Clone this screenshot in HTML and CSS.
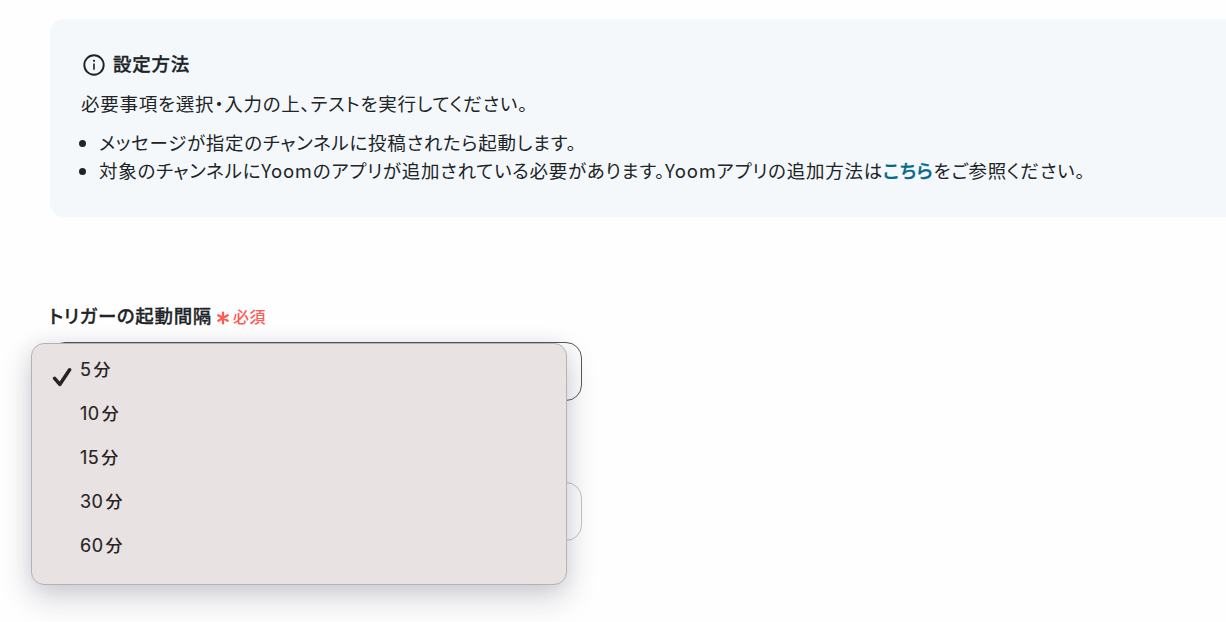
FILE: index.html
```html
<!DOCTYPE html>
<html lang="ja">
<head>
  <meta charset="UTF-8">
  <title>トリガー設定</title>
  <link rel="stylesheet" href="styles.css">
</head>
<body>
  <section class="guide">
    <h2 class="guide-title">
      <svg class="info-icon" viewBox="0 0 22 22" width="22" height="22" fill="none" stroke="#1c2226">
        <circle cx="11" cy="11" r="9.7" stroke-width="1.9"/>
        <path d="M11 9.6v6.2" stroke-width="1.6"/>
        <circle cx="11" cy="6.8" r="1.1" fill="#1c2226" stroke="none"/>
      </svg>
      <span>設定方法</span>
    </h2>
    <p class="guide-text">必要事項を選択・入力の上、テストを実行してください。</p>
    <ul class="guide-list">
      <li>メッセージが指定のチャンネルに投稿されたら起動します。</li>
      <li>対象のチャンネルにYoomのアプリが追加されている必要があります。Yoomアプリの追加方法は<a class="guide-link">こちら</a>をご参照ください。</li>
    </ul>
  </section>

  <main class="form">
    <div class="label">
      <span class="label-text">トリガーの起動間隔</span>
      <svg class="asterisk" viewBox="0 0 12 14" width="12" height="14" stroke="#ff5a55" stroke-width="2.3" stroke-linecap="round">
        <path d="M6 1.6v10.8M1.3 4.3l9.4 5.4M10.7 4.3L1.3 9.7"/>
      </svg>
      <span class="required">必須</span>
    </div>
    <div class="select">
      <ul class="menu">
        <li>
          <svg class="check" viewBox="0 0 20 20" width="20" height="20" fill="none" stroke="#272223" stroke-width="3.5" stroke-linecap="round" stroke-linejoin="round">
            <path d="M2.6 11.4l5.2 6L17.6 2.8"/>
          </svg>
          <span>5</span>分
        </li>
        <li><span>10</span>分</li>
        <li><span>15</span>分</li>
        <li><span>30</span>分</li>
        <li><span>60</span>分</li>
      </ul>
    </div>
    <div class="select next"></div>
  </main>
</body>
</html>
```
FILE: styles.css
```css
* {
  box-sizing: border-box;
}
body {
  margin: 0; height: 622px; overflow: hidden;
  background: #fefefe; color: #202427;
  font-family: "Noto Sans CJK JP", sans-serif;
  font-size: 18.5px;
  font-feature-settings: "palt";
  letter-spacing: 0.74px;
}
.guide {
  margin: 19px 0 0 50px; height: 198px;
  padding: 30px 0 0 31px;
  background: #f4f8fb;
  border-radius: 14px 0 0 14px;
  white-space: nowrap;
}
.guide-title {
  display: flex; align-items: center; gap: 8px;
  margin: 0; padding-left: 2px;
  font-size: 18.5px; font-weight: 500; line-height: 28px;
  -webkit-text-stroke: 0.3px;
}
.info-icon {
  position: relative; top: 2px;
}
.guide-text {
  margin: 12px 0 11px; line-height: 28px;
}
.guide-list {
  margin: 0; padding-left: 18px;
  line-height: 28px;
}
.guide-list li::marker {
  font-size: 17px;
}
.guide-link {
  color: #04678c; font-weight: 500;
  -webkit-text-stroke: 0.3px;
}

.form {
  padding: 84px 0 0 31px;
}
.label {
  display: flex; align-items: center;
  height: 28px; margin-left: 18px;
}
.label-text {
  font-size: 18.5px; font-weight: 500;
  letter-spacing: 0.65px;
  -webkit-text-stroke: 0.3px;
}
.asterisk {
  margin: 5px 4px 0 5px;
}
.required {
  margin-top: 1px;
  color: #ff5a55; font-size: 16px; font-weight: 500;
  letter-spacing: 0.5px;
}
.select {
  position: relative;
  width: 533px; height: 59px;
  margin: 13px 0 0 18px;
  border: 1px solid #5c5759; border-radius: 16px;
}
.select.next {
  margin-top: 81px;
  border-color: #c6c4c6;
}

/* open menu, covers the selects */
.menu {
  position: absolute; z-index: 1;
  top: 0; left: -19px;
  width: 536px; height: 242px;
  margin: 0; padding: 4px 0;
  background: #e8e2e2;
  border: 1px solid #b5b2b5; border-radius: 13px;
  box-shadow: 0 12px 30px rgba(40, 30, 60, 0.22), 0 0 20px rgba(40, 30, 60, 0.06);
  list-style: none;
  color: #272223; font-size: 17px; font-weight: 500;
}
.menu li {
  position: relative;
  height: 44px; padding-left: 48px;
  line-height: 42px;
}
.menu span {
  margin-right: 2px;
  font-family: Inter, sans-serif; font-size: 18px; font-weight: 400;
  letter-spacing: 0.5px;
  -webkit-text-stroke: 0.15px;
}
.check {
  position: absolute;
  left: 20px; top: 19px;
}
```
